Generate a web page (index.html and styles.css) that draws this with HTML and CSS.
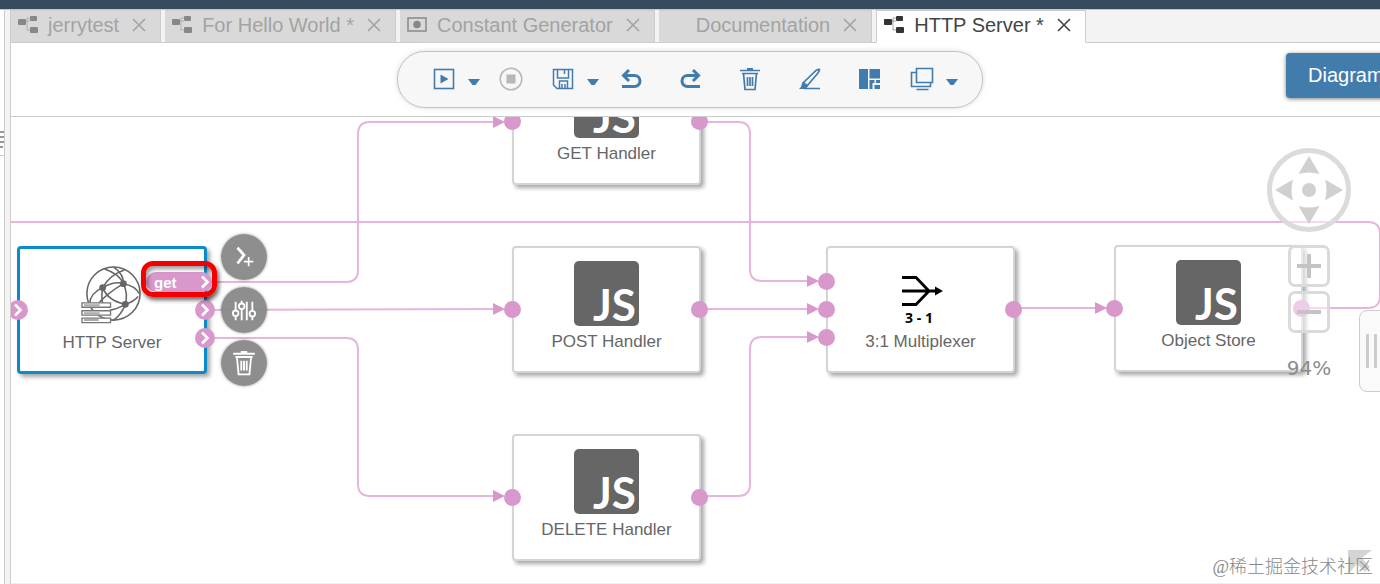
FILE: index.html
```html
<!DOCTYPE html>
<html lang="en">
<head>
    <meta charset="UTF-8">
    <meta name="viewport" content="width=device-width, initial-scale=1.0">
    <title>HTTP Server - Modeler</title>
    <link rel="stylesheet" href="styles.css">
</head>
<body>
    <!-- Shared icons -->
    <svg class="defs" width="0" height="0" aria-hidden="true">
        <symbol id="i-graph" viewBox="0 0 20 20">
            <path d="M6 6h6M9 6v9h4M9 6V3h4" fill="none" stroke="currentColor" stroke-opacity=".45"/>
            <rect x="0" y="4" width="8" height="6" rx="1" fill="currentColor"/>
            <rect x="12" y="1" width="7" height="5" rx="1" fill="currentColor"/>
            <rect x="12" y="12" width="8" height="6" rx="1" fill="currentColor"/>
        </symbol>
        <symbol id="i-close" viewBox="0 0 14 14">
            <path d="M1 1l12 12M13 1L1 13" fill="none" stroke="currentColor" stroke-width="1.6"/>
        </symbol>
        <symbol id="i-caret" viewBox="0 0 14 8">
            <path d="M1 1h12L8.500 7h-3z" fill="currentColor"/>
        </symbol>
        <symbol id="i-trash" viewBox="0 0 24 24">
            <path d="M2 3.500h20M9 1.800h6M4 6.500h16M5.500 6.500l1.500 16h10l1.500-16M9.500 10v9M12 10v9M14.500 10v9" fill="none" stroke="currentColor" stroke-width="1.700"/>
        </symbol>
        <symbol id="i-chevron" viewBox="0 0 12 14">
            <path d="M3 1.500L8.500 7 3 12.500" fill="none" stroke="#fff" stroke-width="2.600"/>
        </symbol>
    </svg>

    <div class="shell-bar"></div>
    <div class="workspace">
        <div class="side-panel">
            <svg width="4" height="30" viewBox="0 0 4 30"><path d="M0 5h4M0 10h4M0 15h4M0 20h3" stroke="#777" stroke-width="1.500"/><path d="M0 28.500h4" stroke="#ccc"/></svg>
        </div>
        <main class="editor">
            <nav class="tabs">
                <div class="tab">
                    <svg class="tab-icon"><use href="#i-graph"/></svg>
                    <a href="#">jerrytest</a>
                    <button class="tab-close" aria-label="Close"><svg><use href="#i-close"/></svg></button>
                </div>
                <div class="tab">
                    <svg class="tab-icon"><use href="#i-graph"/></svg>
                    <a href="#">For Hello World *</a>
                    <button class="tab-close" aria-label="Close"><svg><use href="#i-close"/></svg></button>
                </div>
                <div class="tab">
                    <svg class="tab-icon" viewBox="0 0 20 20"><rect x="1" y="3" width="18" height="13" fill="none" stroke="currentColor" stroke-width="1.500"/><circle cx="10" cy="9.500" r="3.800" fill="currentColor"/></svg>
                    <a href="#">Constant Generator</a>
                    <button class="tab-close" aria-label="Close"><svg><use href="#i-close"/></svg></button>
                </div>
                <div class="tab">
                    <span class="tab-icon"></span>
                    <a href="#">Documentation</a>
                    <button class="tab-close" aria-label="Close"><svg><use href="#i-close"/></svg></button>
                </div>
                <div class="tab active">
                    <svg class="tab-icon"><use href="#i-graph"/></svg>
                    <a href="#">HTTP Server *</a>
                    <button class="tab-close" aria-label="Close"><svg><use href="#i-close"/></svg></button>
                </div>
            </nav>

            <div class="toolbar">
                <div class="tools">
                    <div class="tool-group">
                        <button class="tool" aria-label="Run"><svg viewBox="0 0 24 24"><rect x="2.500" y="2.500" width="19" height="19" fill="none" stroke="currentColor" stroke-width="1.600"/><path d="M8.500 7.500l8 4.500-8 4.500z" fill="currentColor"/></svg></button>
                        <button class="tool-menu" aria-label="Run options"><svg><use href="#i-caret"/></svg></button>
                    </div>
                    <button class="tool" aria-label="Stop" disabled><svg viewBox="0 0 24 24"><circle cx="12" cy="12" r="10.800" fill="none" stroke="currentColor" stroke-width="1.500"/><rect x="7.500" y="7.500" width="9" height="9" fill="currentColor"/></svg></button>
                    <div class="tool-group section">
                        <button class="tool" aria-label="Save"><svg viewBox="0 0 24 24"><path d="M2.500 2.500h19v19H6l-3.500-3.500zM6.500 2.500v8.500h11V2.500M8.500 21.500V14h8v7.500M13.500 3v4M11 17v4.500M14 17v4.500" fill="none" stroke="currentColor" stroke-width="1.500"/></svg></button>
                        <button class="tool-menu" aria-label="Save options"><svg><use href="#i-caret"/></svg></button>
                    </div>
                    <button class="tool" aria-label="Undo"><svg viewBox="0 0 24 24"><path d="M11 3L5.500 8.500 11 14M6 8.500h10.500a5.500 5.500 0 0 1 0 11H4" fill="none" stroke="currentColor" stroke-width="3"/></svg></button>
                    <button class="tool apart" aria-label="Redo"><svg viewBox="0 0 24 24"><path d="M15 3l5.500 5.500L15 14M20 8.500H9.500a5.500 5.500 0 0 0 0 11H22" fill="none" stroke="currentColor" stroke-width="3"/></svg></button>
                    <button class="tool apart" aria-label="Delete"><svg><use href="#i-trash"/></svg></button>
                    <button class="tool apart" aria-label="Edit"><svg viewBox="0 0 24 24"><path d="M4.500 16.500L18 3.500q2.500-1.500 3.500-1-.5 2-1.500 3.500L8.500 19.500M6 21.500h16" fill="none" stroke="currentColor" stroke-width="1.700"/><path d="M5 14.500l5.500 4-3 3.500H1q2.500-1.500 2.500-4z" fill="currentColor"/></svg></button>
                    <button class="tool apart" aria-label="Auto layout"><svg viewBox="0 0 24 24" fill="currentColor"><path d="M1 2h9v20H1zM11.500 2H22v9.500H11.500zM11.500 13h5v3h-2v6h-3zM18 13h4v3h-4zM16.500 18h2v4h-2zM18 18h4v4h-4z"/></svg></button>
                    <div class="tool-group section">
                        <button class="tool" aria-label="Group"><svg viewBox="0 0 24 24" fill="none" stroke="currentColor" stroke-width="1.600"><path d="M6.500 1.500h16v14h-16zM6 5.500H1.500v14h19V16M6.500 22.500h12"/></svg></button>
                        <button class="tool-menu" aria-label="Group options"><svg><use href="#i-caret"/></svg></button>
                    </div>
                </div>
                <button class="view-switch">Diagram</button>
            </div>

            <div class="canvas">
                <svg class="wires">
                    <defs>
                        <marker id="arrow" markerUnits="userSpaceOnUse" markerWidth="12" markerHeight="12" refX="2" refY="6" orient="auto">
                            <path d="M0 0l12 6-12 6z" fill="#d898cc"/>
                        </marker>
                    </defs>
                    <path d="M0 105H1357Q1369 105 1369 117V179Q1369 191 1357 191H1291"/>
                    <g marker-end="url(#arrow)">
                        <path d="M197 165H335Q347 165 347 153V17Q347 5 359 5H484"/>
                        <path d="M197 193L484 192"/>
                        <path d="M197 221H335Q347 221 347 233V367Q347 379 359 379H484"/>
                        <path d="M689 5H727Q739 5 739 17V152Q739 164 751 164H798"/>
                        <path d="M689 192H798"/>
                        <path d="M689 379H727Q739 379 739 367V232Q739 220 751 220H798"/>
                        <path d="M1003 191H1086"/>
                    </g>
                </svg>

                <div class="node selected" id="httpServer">
                    <svg class="node-icon" viewBox="4 0 66 66">
                        <g fill="none" stroke="#666" stroke-width="1.600">
                            <circle cx="38" cy="32" r="27"/>
                            <path d="M27 26Q34 13 49 8M27 26Q39 19 48 22M48 22Q44 12 29 7M48 22Q60 24 64 32M48 22Q53 32 50 43M50 43Q32 39 27 26M50 43Q59 40 63 35M50 43Q46 54 38 59M27 26Q14 32 14 42M27 26Q25 40 28 43M48 22Q30 33 22 43M38 5Q49 13 48 22M34 49Q41 48 50 43"/>
                        </g>
                        <g fill="#666"><circle cx="27" cy="26" r="3.500"/><circle cx="48" cy="22" r="3.500"/><circle cx="50" cy="43" r="3.500"/></g>
                        <g fill="#fff" stroke="#777" stroke-width="1.400"><path d="M6 41.500h29v4.500H6zM6 49.500h29V54H6zM6 57h29v4.500H6z"/></g>
                        <path d="M8 44h16M8 52h16M8 59h15" stroke="#aaa" stroke-width="2"/>
                    </svg>
                    <span class="node-label">HTTP Server</span>
                    <span class="port open in"><svg><use href="#i-chevron"/></svg></span>
                    <span class="port-name">get<svg><use href="#i-chevron"/></svg></span>
                    <span class="port open out"><svg><use href="#i-chevron"/></svg></span>
                    <span class="port open out low"><svg><use href="#i-chevron"/></svg></span>
                    <div class="highlight"></div>
                </div>

                <div class="node" id="getHandler">
                    <svg class="node-icon" viewBox="0 0 65 65"><rect width="65" height="65" rx="5" fill="#666"/><text class="js" x="62" y="60">JS</text></svg>
                    <span class="node-label">GET Handler</span>
                    <span class="port in"></span><span class="port out"></span>
                </div>
                <div class="node" id="postHandler">
                    <svg class="node-icon" viewBox="0 0 65 65"><rect width="65" height="65" rx="5" fill="#666"/><text class="js" x="62" y="60">JS</text></svg>
                    <span class="node-label">POST Handler</span>
                    <span class="port in"></span><span class="port out"></span>
                </div>
                <div class="node" id="deleteHandler">
                    <svg class="node-icon" viewBox="0 0 65 65"><rect width="65" height="65" rx="5" fill="#666"/><text class="js" x="62" y="60">JS</text></svg>
                    <span class="node-label">DELETE Handler</span>
                    <span class="port in"></span><span class="port out"></span>
                </div>
                <div class="node" id="multiplexer">
                    <svg class="node-icon" viewBox="0 0 65 65">
                        <path d="M14 16.500h14l13 13.500-13 13.500H14M14 30h34" fill="none" stroke="#000" stroke-width="2.800"/>
                        <path d="M47 25.500l8 4.500-8 4.500z"/>
                        <text class="ratio" x="31" y="62">3 - 1</text>
                    </svg>
                    <span class="node-label">3:1 Multiplexer</span>
                    <span class="port in high"></span><span class="port in"></span><span class="port in low"></span>
                    <span class="port out"></span>
                </div>
                <div class="node" id="objectStore">
                    <svg class="node-icon" viewBox="0 0 65 65"><rect width="65" height="65" rx="5" fill="#666"/><text class="js" x="62" y="60">JS</text></svg>
                    <span class="node-label">Object Store</span>
                    <span class="port in"></span><span class="port out"></span>
                </div>

                <div class="node-actions">
                    <button aria-label="Add port"><svg viewBox="0 0 28 28" fill="none" stroke="#fff"><path d="M7 4l7 8-7 9" stroke-width="3"/><path d="M19 14v10M14 19h10" stroke-width="1.800"/></svg></button>
                    <button aria-label="Open configuration"><svg viewBox="0 0 28 28" fill="none" stroke="#fff" stroke-width="2"><path d="M5 5v9M5 21v4M11.500 4v3M11.500 13v12M17 5v20M23 5v10M23 21v4"/><circle cx="5" cy="17.500" r="3"/><circle cx="11.500" cy="10" r="3"/><circle cx="23" cy="18" r="3"/></svg></button>
                    <button aria-label="Delete node"><svg><use href="#i-trash"/></svg></button>
                </div>

                <div class="zoom-panel">
                    <svg class="compass" viewBox="0 0 84 84" role="img" aria-label="Pan">
                        <circle cx="42" cy="42" r="39.500" fill="#fff" fill-opacity=".5" stroke="#dbdbdb" stroke-width="5"/>
                        <g fill="#d0d0d0"><circle cx="42" cy="42" r="7"/><path d="M42 8l10.500 18q-10.500-3-21 0zM42 76l10.500-18q-10.500 3-21 0zM8 42l18-10.500q-3 10.500 0 21zM76 42L58 31.500q3 10.500 0 21z"/></g>
                    </svg>
                    <button aria-label="Zoom in"><svg viewBox="0 0 24 24"><path d="M12 0v24M0 12h24" stroke="#c4c4c4" stroke-width="4"/></svg></button>
                    <button aria-label="Zoom out"><svg viewBox="0 0 24 24"><path d="M0 12h24" stroke="#c4c4c4" stroke-width="4"/></svg></button>
                    <span class="zoom-level">94%</span>
                </div>
                <button class="drawer-handle" aria-label="Open details"></button>

                <svg class="corner" viewBox="0 0 24 24"><path d="M0 0h24l-10 8 8 9-5 5-8-8-9 10z" fill="#d4d4d4"/></svg>
                <span class="watermark">@稀土掘金技术社区</span>
            </div>
        </main>
    </div>
</body>
</html>
```
FILE: styles.css
```css
* {
    margin: 0;
    padding: 0;
    box-sizing: border-box;
}

body {
    display: flex;
    flex-direction: column;
    min-height: 100vh;
    font-family: "Liberation Sans", Arial, sans-serif;
    background: #fff;
    overflow: hidden;
}

button {
    border: none;
    background: none;
    font-family: inherit;
    cursor: pointer;
}

svg {
    display: block;
}

.defs {
    position: absolute;
}

.shell-bar {
    height: 9px;
    background: #354a5f;
}

.workspace {
    flex: 1;
    display: flex;
    background: #f3f3f3;
    border-top: 1px solid #c8c8c8;
}

.side-panel {
    width: 5px;
    margin-right: 5px;
    padding-top: 117px;
    background: #fff;
    border-right: 1px solid #ccc;
}

.editor {
    flex: 1;
    min-width: 0;
    display: flex;
    flex-direction: column;
    border-left: 1px solid #ccc;
}

/* Tabs */
.tabs {
    display: flex;
    gap: 4px;
    height: 33px;
    border-bottom: 1px solid #ccc;
}

.tab {
    display: flex;
    align-items: center;
    height: 33px;
    padding: 0 14px 4px 7px;
    background: #d9d9d9;
    border: 1px solid #ccc;
    border-left: none;
    color: #a3a3a3;
    white-space: nowrap;
}

.tab a {
    margin: 0 13px 0 10px;
    font-size: 20px;
    line-height: 24px;
    color: inherit;
    text-decoration: none;
}

.tab-icon {
    width: 20px;
    height: 20px;
    color: #888;
}

.tab-close,
.tab-close svg {
    width: 14px;
    height: 14px;
    color: inherit;
}

.tab.active {
    background: #fff;
    border-left: 1px solid #ccc;
    border-bottom-color: #fff;
    color: #444;
}

.tab.active .tab-icon {
    color: #333;
}

/* Toolbar */
.toolbar {
    display: grid;
    grid-template-columns: 1fr auto 1fr;
    align-items: center;
    height: 74px;
    padding-right: 11px;
    background: #fff;
    border-bottom: 1px solid #ccc;
    overflow: hidden;
}

.tools {
    grid-column: 2;
    display: flex;
    align-items: center;
    gap: 18px;
    height: 57px;
    padding: 0 23px 2px 34px;
    background: #f7f7f7;
    border: 1px solid #c4c4c4;
    border-radius: 28px;
    box-shadow: 0 0 5px rgba(0,0,0,0.15);
}

.tool-group {
    display: flex;
    align-items: center;
    gap: 11px;
}

.section {
    margin-left: 10px;
}

.apart {
    margin-left: 18px;
}

.tool,
.tool svg {
    width: 24px;
    height: 24px;
    color: #427cac;
}

.tool:disabled,
.tool:disabled svg {
    color: #b8b8b8;
}

.tool-menu {
    padding-top: 6px;
}

.tool-menu svg {
    width: 14px;
    height: 8px;
    color: #427cac;
}

.view-switch {
    justify-self: end;
    width: 140px;
    height: 45px;
    margin: 0 -57px 8px 0;
    padding-left: 22px;
    border-radius: 4px;
    background: #427cac;
    box-shadow: 0 1px 4px rgba(0,0,0,0.5);
    color: #fff;
    font-size: 20px;
    text-align: left;
}

/* Canvas */
.canvas {
    flex: 1;
    position: relative;
    background: #fff;
    border-bottom: 1px solid #eee;
    overflow: hidden;
}

.wires {
    position: absolute;
    width: 100%;
    height: 100%;
    fill: none;
    stroke: #e6b4dc;
    stroke-width: 2;
}

.wires marker {
    stroke: none;
}

.node {
    position: absolute;
    display: flex;
    flex-direction: column;
    align-items: center;
    width: 189px;
    height: 127px;
    padding-top: 13px;
    background: #fff;
    border: 2px solid #d4d4d4;
    border-radius: 4px;
    box-shadow: 3px 3px 4px rgba(0,0,0,0.35);
}

.node.selected {
    width: 190px;
    height: 128px;
    padding-top: 13px;
    border: 3px solid #0c8bc9;
}

#httpServer { left: 6px; top: 129px; }
#getHandler { left: 501px; top: -59px; }
#postHandler { left: 501px; top: 129px; }
#deleteHandler { left: 501px; top: 317px; }
#multiplexer { left: 815px; top: 129px; }
#objectStore { left: 1103px; top: 128px; }

.node-icon {
    width: 65px;
    height: 65px;
    overflow: visible;
}

.node-label {
    margin-top: 6px;
    font-size: 17px;
    line-height: 20px;
    color: #666;
}

.js {
    font: bold 44px Lato, sans-serif;
    text-anchor: end;
    fill: #fff;
}

.ratio {
    font: bold 14px "Noto Sans", sans-serif;
    text-anchor: middle;
}

.port {
    position: absolute;
    top: 53px;
    width: 17px;
    height: 17px;
    border-radius: 50%;
    background: #d898cc;
}

.port.in { left: -10px; }
.port.out { right: -9px; }
.port.high { top: 25px; }
.port.low { top: 81px; }

.port.open {
    top: 51px;
    width: 20px;
    height: 20px;
    padding: 3px 4px;
}

.port.open.in { left: -12px; }
.port.open.out { right: -11px; }
.port.open.low { top: 79px; }

.port.open svg,
.port-name svg {
    width: 12px;
    height: 14px;
}

.port-name {
    position: absolute;
    top: 23px;
    right: -8px;
    display: flex;
    align-items: center;
    justify-content: space-between;
    width: 66px;
    height: 20px;
    padding: 0 1px 0 8px;
    border-radius: 10px;
    background: #d898cc;
    color: #fff;
    font-size: 15px;
    font-weight: bold;
}

.highlight {
    position: absolute;
    top: 12px;
    right: -13px;
    width: 76px;
    height: 36px;
    border: 5px solid #f40000;
    border-radius: 12px;
    box-shadow: 2px 3px 4px rgba(0,0,0,0.6), inset 2px 3px 4px rgba(0,0,0,0.4);
}

.node-actions {
    position: absolute;
    left: 210px;
    top: 117px;
    display: flex;
    flex-direction: column;
    gap: 7px;
}

.node-actions button {
    display: flex;
    align-items: center;
    justify-content: center;
    width: 46px;
    height: 46px;
    border-radius: 50%;
    background: rgba(136,136,136,0.95);
    box-shadow: 0 0 3px rgba(0,0,0,0.4);
    color: #fff;
}

.node-actions svg {
    width: 26px;
    height: 26px;
}

/* Zoom controls */
.zoom-panel {
    position: absolute;
    top: 31px;
    right: 29px;
    display: flex;
    flex-direction: column;
    align-items: center;
    gap: 4px;
}

.compass {
    width: 84px;
    height: 84px;
    margin-bottom: 9px;
}

.zoom-panel button {
    display: flex;
    align-items: center;
    justify-content: center;
    width: 42px;
    height: 42px;
    border: 3px solid #dadada;
    border-radius: 7px;
    background: rgba(255,255,255,0.5);
}

.zoom-panel button svg {
    width: 24px;
    height: 24px;
}

.zoom-level {
    margin-top: 19px;
    font-family: "DejaVu Sans", sans-serif;
    font-size: 20px;
    line-height: 24px;
    color: #8c8c8c;
}

.drawer-handle {
    position: absolute;
    top: 193px;
    right: -10px;
    width: 31px;
    height: 82px;
    padding: 23px 6px;
    border: 1px solid #ccc;
    border-radius: 8px;
    background: #fafafa;
}

.drawer-handle::before {
    content: "";
    display: block;
    width: 5px;
    height: 34px;
    border: solid #ccc;
    border-width: 0 3px;
}

.corner {
    position: absolute;
    right: 8px;
    bottom: 9px;
    width: 24px;
    height: 24px;
}

.watermark {
    position: absolute;
    right: 7px;
    bottom: 3px;
    font-family: "Liberation Serif", "Noto Sans CJK SC", serif;
    font-size: 18px;
    font-weight: 300;
    line-height: 26px;
    color: #888;
}
```
